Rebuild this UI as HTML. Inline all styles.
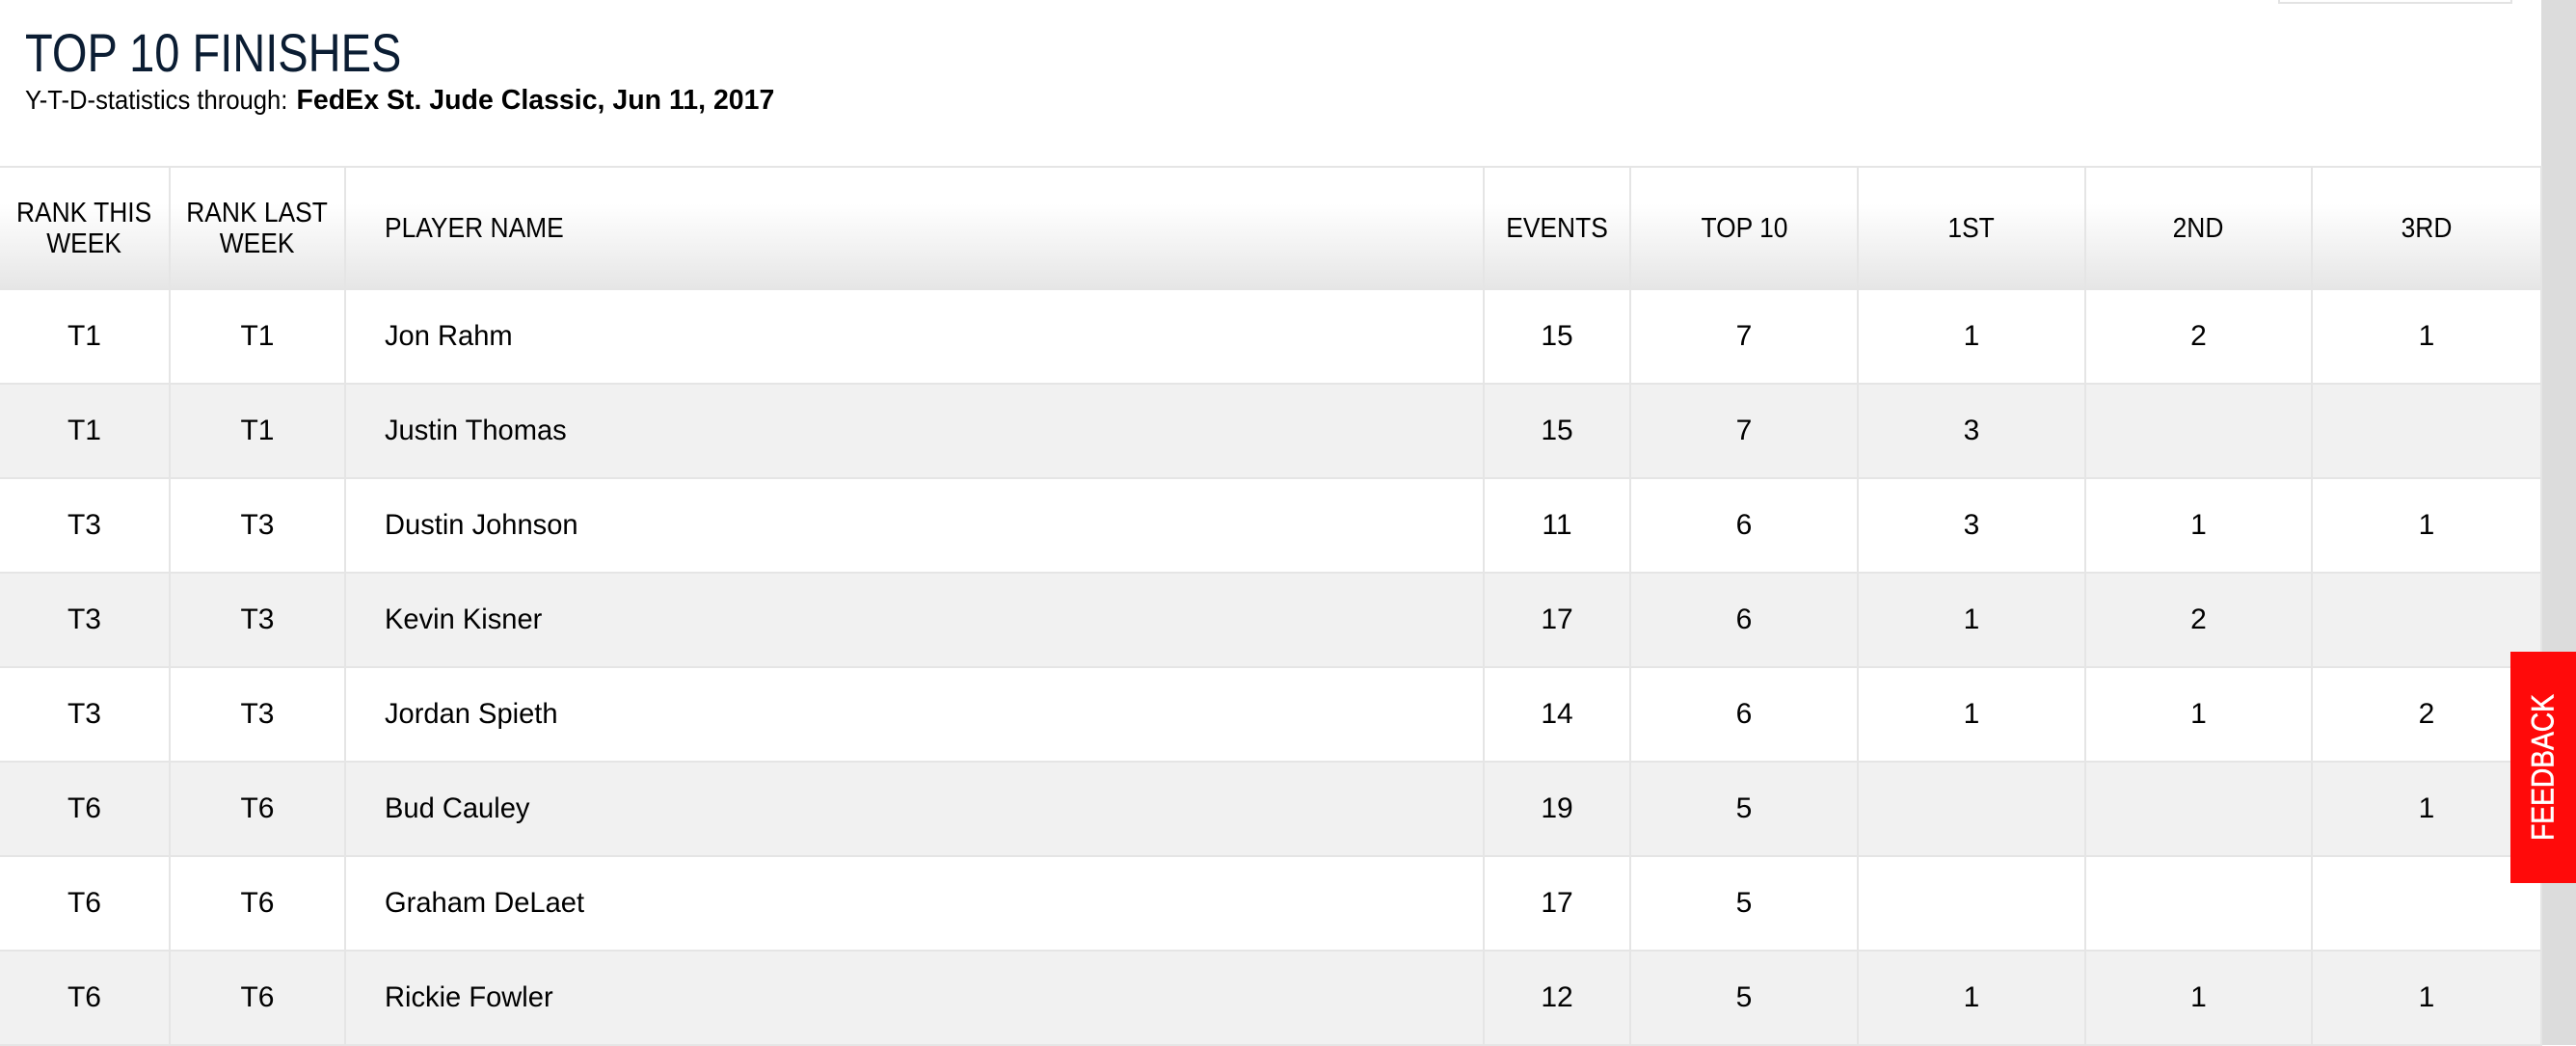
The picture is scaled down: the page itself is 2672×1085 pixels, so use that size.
<!DOCTYPE html>
<html><head><meta charset="utf-8"><style>
*{margin:0;padding:0;box-sizing:border-box}
body{width:2672px;height:1084px;overflow:hidden;background:#fff;font-family:"Liberation Sans",sans-serif;color:#000;position:relative}
.sb{position:absolute;left:2636px;top:0;width:36px;height:1084px;background:#dcdcdc}
.box{position:absolute;left:2363px;top:-4px;width:243px;height:8px;border:2px solid #e3e3e3;background:#fff}
h1{position:absolute;left:26px;top:22px;font-size:56px;font-weight:normal;color:#0b1d33;transform:scaleX(0.84);transform-origin:left;white-space:nowrap}
.sub{position:absolute;left:26px;top:88px;font-size:28px;color:#000;white-space:nowrap}
.sub span{display:inline-block;transform:scaleX(0.915);transform-origin:left;margin-right:-24px}
.sub b{display:inline-block;font-size:28.5px}
table{position:absolute;left:0;top:172px;width:2636px;border-collapse:collapse;table-layout:fixed}
td,th{border:2px solid #e5e5e5;text-align:center;font-size:30px;font-weight:normal;white-space:nowrap}
th{height:127px;background:linear-gradient(#fff 30%,#e6e6e6);font-size:29px;line-height:32px}
th span{display:inline-block;transform:scaleX(0.91)}
td span{display:inline-block;transform:scaleX(0.97)}
.l span{transform-origin:left}
td{height:98px}
tbody tr:nth-child(odd) td{background:#fff}
tbody tr:nth-child(even) td{background:#f1f1f1}
.l{text-align:left;padding-left:40px}
td:first-child,th:first-child{border-left:none}
.fb{position:absolute;left:2604px;top:676px;width:68px;height:240px;background:#ff0a0a;color:#fff}
.fb span{position:absolute;left:50%;top:50%;transform:translate(-50%,-50%) rotate(-90deg) scaleX(0.88);font-size:32px;white-space:nowrap;-webkit-text-stroke:0.6px #fff}
</style></head><body>
<div class="sb"></div>
<div class="box"></div>
<h1>TOP 10 FINISHES</h1>
<div class="sub"><span>Y-T-D-statistics through:</span> <b>FedEx St. Jude Classic, Jun 11, 2017</b></div>
<table>
<colgroup><col style="width:176px"><col style="width:182px"><col style="width:1181px"><col style="width:152px"><col style="width:236px"><col style="width:236px"><col style="width:235px"><col style="width:238px"></colgroup>
<thead><tr><th><span>RANK THIS<br>WEEK</span></th><th><span>RANK LAST<br>WEEK</span></th><th class="l"><span>PLAYER NAME</span></th><th><span>EVENTS</span></th><th><span>TOP 10</span></th><th><span>1ST</span></th><th><span>2ND</span></th><th><span>3RD</span></th></tr></thead>
<tbody>
<tr><td>T1</td><td>T1</td><td class="l"><span>Jon Rahm</span></td><td>15</td><td>7</td><td>1</td><td>2</td><td>1</td></tr>
<tr><td>T1</td><td>T1</td><td class="l"><span>Justin Thomas</span></td><td>15</td><td>7</td><td>3</td><td></td><td></td></tr>
<tr><td>T3</td><td>T3</td><td class="l"><span>Dustin Johnson</span></td><td>11</td><td>6</td><td>3</td><td>1</td><td>1</td></tr>
<tr><td>T3</td><td>T3</td><td class="l"><span>Kevin Kisner</span></td><td>17</td><td>6</td><td>1</td><td>2</td><td></td></tr>
<tr><td>T3</td><td>T3</td><td class="l"><span>Jordan Spieth</span></td><td>14</td><td>6</td><td>1</td><td>1</td><td>2</td></tr>
<tr><td>T6</td><td>T6</td><td class="l"><span>Bud Cauley</span></td><td>19</td><td>5</td><td></td><td></td><td>1</td></tr>
<tr><td>T6</td><td>T6</td><td class="l"><span>Graham DeLaet</span></td><td>17</td><td>5</td><td></td><td></td><td></td></tr>
<tr><td>T6</td><td>T6</td><td class="l"><span>Rickie Fowler</span></td><td>12</td><td>5</td><td>1</td><td>1</td><td>1</td></tr>
</tbody></table>
<div class="fb"><span>FEEDBACK</span></div>
</body></html>
